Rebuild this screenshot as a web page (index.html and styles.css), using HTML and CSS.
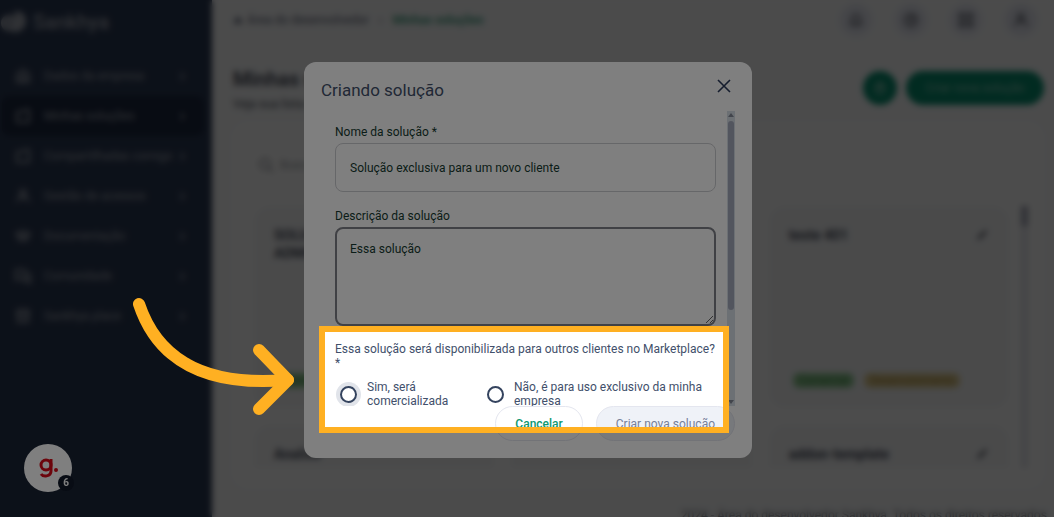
FILE: index.html
```html
<!DOCTYPE html>
<html lang="pt-BR">
<head>
    <meta charset="utf-8">
    <title>Minhas soluções</title>
    <link rel="stylesheet" href="styles.css">
</head>
<body>
    <div class="app">
        <aside class="sidebar">
            <div class="logo">
                <svg width="26" height="24" viewBox="0 0 26 24" fill="none" stroke="currentColor" stroke-width="6"><circle cx="8" cy="13" r="5"/><path d="M12 19c6 1 10-3 10-8s-4-8-8-6"/><circle cx="15" cy="12" r="2"/></svg>
                <span>Sankhya</span>
            </div>
            <nav class="menu">
                <a href="#"><svg class="icon" viewBox="0 0 16 16"><path d="M2 6l6-4 6 4v8H2zM5 8h6M5 11h6"/></svg><span>Dados da empresa</span><b>›</b></a>
                <a href="#" class="active"><svg class="icon" viewBox="0 0 16 16"><path d="M2 4h5l2-2h5v12H2z"/></svg><span>Minhas soluções</span><b>›</b></a>
                <a href="#"><svg class="icon" viewBox="0 0 16 16"><path d="M2 4h5l2-2h5v12H2z"/></svg><span>Compartilhadas comigo</span><b>›</b></a>
                <a href="#"><svg class="icon" viewBox="0 0 16 16"><circle cx="8" cy="5" r="3"/><path d="M2 14c0-6 12-6 12 0"/></svg><span>Gestão de acessos</span><b>›</b></a>
                <a href="#"><svg class="icon" viewBox="0 0 16 16"><path d="M1 6l7-3 7 3-7 3zM4 8v4h8V8"/></svg><span>Documentação</span><b>›</b></a>
                <a href="#"><svg class="icon" viewBox="0 0 16 16"><path d="M1 2h9v8H4l-3 2zM12 6h3v9l-3-2H7"/></svg><span>Comunidade</span><b>›</b></a>
                <a href="#"><svg class="icon" viewBox="0 0 16 16"><path d="M2 6l1-4h10l1 4zM3 7v7h10V7M6 10h4"/></svg><span>Sankhya place</span><b>›</b></a>
            </nav>
        </aside>

        <main class="main">
            <header class="topbar">
                <div class="breadcrumb">
                    <svg class="home" viewBox="0 0 16 16"><path d="M2 8l6-6 6 6v6H2z"/></svg>
                    <a href="#">Área do desenvolvedor</a>
                    <span class="sep">›</span>
                    <a href="#" class="current">Minhas soluções</a>
                </div>
                <div class="actions">
                    <button type="button" aria-label="Notificações"><svg class="icon" viewBox="0 0 16 16"><path d="M4 11V7a4 4 0 0 1 8 0v4l1 1H3zM7 14h2"/></svg></button>
                    <button type="button" aria-label="Ajuda"><svg class="icon" viewBox="0 0 16 16"><circle cx="8" cy="8" r="6"/><path d="M6 6h4L8 9v2"/></svg></button>
                    <button type="button" aria-label="Aplicativos"><svg class="icon" viewBox="0 0 16 16"><path d="M2 2h4v4H2zM10 2h4v4h-4zM2 10h4v4H2zM10 10h4v4h-4z"/></svg></button>
                    <button type="button" aria-label="Perfil"><svg class="icon" viewBox="0 0 16 16"><circle cx="8" cy="5" r="3"/><path d="M2 14c0-6 12-6 12 0"/></svg></button>
                </div>
            </header>

            <div class="page-head">
                <div class="page-title">
                    <h1>Minhas soluções</h1>
                    <p>Veja sua lista de soluções</p>
                </div>
                <div class="page-buttons">
                    <button type="button" class="round" aria-label="Baixar"><svg class="icon" viewBox="0 0 16 16"><path d="M8 2l5 6H3zM3 13h10"/></svg></button>
                    <button type="button" class="pill">Criar nova solução</button>
                </div>
            </div>

            <section class="panel">
                <div class="search">
                    <svg class="icon" viewBox="0 0 16 16"><circle cx="7" cy="7" r="5"/><path d="M11 11l4 4"/></svg>
                    <span>Buscar</span>
                </div>
                <div class="list">
                    <div class="cards">
                        <article class="card">
                            <h3>SOLUÇÃO<br>ADMIN</h3>
                            <div class="tags"><span class="tag green">Comercial</span></div>
                        </article>
                        <article class="card"></article>
                        <article class="card">
                            <h3>teste 401</h3>
                            <svg class="edit" viewBox="0 0 16 16"><path d="M2 14l2-5 8-7 2 2-7 8z"/></svg>
                            <div class="tags"><span class="tag green">Comercial</span><span class="tag yellow">Desenvolvimento</span></div>
                        </article>
                        <article class="card"><h3>Analise</h3></article>
                        <article class="card"></article>
                        <article class="card">
                            <h3>addon-template</h3>
                            <svg class="edit" viewBox="0 0 16 16"><path d="M2 14l2-5 8-7 2 2-7 8z"/></svg>
                        </article>
                    </div>
                    <div class="list-scroll"><div></div></div>
                </div>
            </section>
            <footer>2024 - Área do desenvolvedor Sankhya. Todos os direitos reservados.</footer>
        </main>
    </div>

    <div class="backdrop"></div>

    <button type="button" class="chat" aria-label="Ajuda">
        <svg width="24" height="24" viewBox="0 0 24 24" fill="none" stroke="#d80a18" stroke-width="3"><circle cx="10" cy="9" r="5"/><path d="M15 3v12c0 6-8 6-10 3"/><circle cx="20" cy="14" r="1" stroke-width="2"/></svg>
        <span class="badge">6</span>
    </button>

    <div class="modal-layer">
        <div class="modal" role="dialog" aria-labelledby="modal-title">
            <div class="modal-header">
                <h2 id="modal-title">Criando solução</h2>
                <button type="button" class="close" aria-label="Fechar">
                    <svg width="14" height="14" viewBox="0 0 14 14" fill="none" stroke="currentColor" stroke-width="1.6"><path d="M1 1l12 12M13 1L1 13"/></svg>
                </button>
            </div>

            <form>
                <div class="modal-body">
                    <div class="fields">
                        <label for="name">Nome da solução *</label>
                        <input type="text" id="name" class="text" value="Solução exclusiva para um novo cliente">

                        <label for="description">Descrição da solução</label>
                        <textarea id="description" class="text">Essa solução</textarea>

                        <fieldset>
                            <legend>Essa solução será disponibilizada para outros clientes no Marketplace? *</legend>
                            <div class="options">
                                <label class="option"><input type="radio" name="market" class="focused"><span>Sim, será comercializada</span></label>
                                <label class="option"><input type="radio" name="market"><span>Não, é para uso exclusivo da minha empresa</span></label>
                            </div>
                        </fieldset>
                    </div>
                    <div class="scrollbar">
                        <svg viewBox="0 0 8 10"><path d="M1 6l3-4 3 4z"/></svg>
                        <div class="thumb"></div>
                        <svg viewBox="0 0 8 10"><path d="M1 4l3 4 3-4z"/></svg>
                    </div>
                </div>
                <div class="modal-footer">
                    <button type="button" class="cancel">Cancelar</button>
                    <button type="submit" class="create">Criar nova solução</button>
                </div>
            </form>

            <div class="spotlight"></div>
            <svg class="arrow" width="172" height="130" viewBox="128 292 172 130" fill="none" stroke="#ffb022" stroke-width="12" stroke-linecap="round" stroke-linejoin="round">
                <path d="M139 304C155 352 195 388 288 380"/>
                <path d="M259 350L288 380L259 409"/>
            </svg>
        </div>
    </div>
</body>
</html>
```

FILE: styles.css
```css
* {
    box-sizing: border-box;
}

body {
    margin: 0;
    height: 100vh;
    overflow: hidden;
    font-family: Roboto, "Liberation Sans", sans-serif;
    font-size: 12px;
    background-color: #fafbfc;
}

button, input, textarea {
    font-family: inherit;
    font-size: inherit;
}

a {
    color: inherit;
    text-decoration: none;
}

h1, h2, h3, p {
    margin: 0;
}

.icon {
    width: 16px;
    height: 16px;
    fill: none;
    stroke: currentColor;
    stroke-width: 2;
}

/* page behind the dialog */
.app {
    display: flex;
    height: 100vh;
}

.sidebar {
    width: 212px;
    flex-shrink: 0;
    background-color: #2b3a55;
    color: #a3a8b3;
}

.logo {
    display: flex;
    align-items: center;
    gap: 6px;
    height: 44px;
    padding-left: 1px;
    font-size: 20px;
    font-weight: 500;
}

.menu {
    padding: 12px 8px 0 2px;
}

.menu a {
    display: flex;
    align-items: center;
    height: 40px;
    padding: 0 16px 0 13px;
    border-radius: 8px;
}

.menu .active {
    background-color: #1c2840;
}

.menu span {
    flex: 1;
    padding-left: 13px;
    white-space: nowrap;
}

.menu b {
    padding: 0 3px 4px 0;
    font-size: 18px;
}

.main {
    flex: 1;
    min-width: 0;
    display: flex;
    flex-direction: column;
}

.topbar {
    display: flex;
    justify-content: space-between;
    align-items: center;
    height: 40px;
    flex-shrink: 0;
    padding: 0 17px 0 21px;
}

.breadcrumb {
    display: flex;
    align-items: center;
    gap: 4px;
    color: #5d6478;
}

.home {
    width: 10px;
    height: 10px;
    fill: #7a8090;
}

.sep {
    padding: 0 6px;
}

.breadcrumb .current {
    color: #2f9a78;
    font-weight: 500;
}

.actions {
    display: flex;
    gap: 23px;
}

.actions button {
    width: 32px;
    height: 32px;
    padding: 8px;
    border: none;
    border-radius: 50%;
    background-color: #e6e8f2;
    color: #6a6d78;
}

.actions svg {
    display: block;
}

.page-head {
    display: flex;
    justify-content: space-between;
    align-items: flex-start;
    height: 82px;
    flex-shrink: 0;
    padding: 27px 10px 0 21px;
    color: #4d525e;
}

.page-title h1 {
    font-size: 20px;
    line-height: 24px;
    margin-bottom: 6px;
}

.page-buttons {
    display: flex;
    gap: 9px;
    padding-top: 4px;
}

.page-buttons button {
    height: 34px;
    border: none;
    border-radius: 17px;
    background-color: #069070;
    color: #8fc9b9;
}

.round {
    width: 34px;
    padding: 9px;
}

.pill {
    width: 138px;
}

.panel {
    flex-shrink: 0;
    margin: 0 10px 0 20px;
    padding: 34px 16px 20px 22px;
    border-radius: 16px;
    background-color: #ffffff;
}

.search {
    display: flex;
    align-items: center;
    gap: 6px;
    padding: 0 4px;
    height: 18px;
    color: #a0a3a8;
}

.list {
    display: flex;
    height: 262px;
    margin-top: 32px;
}

.cards {
    flex: 1;
    display: grid;
    grid-template-columns: repeat(3, 1fr);
    grid-auto-rows: 202px;
    gap: 17px;
    margin-right: 12px;
    overflow: hidden;
}

.card {
    position: relative;
    padding: 20px;
    border-radius: 16px;
    background-color: #f7f8f9;
    color: #4d5262;
    display: flex;
    flex-direction: column;
    justify-content: space-between;
}

.card h3 {
    font-size: 14px;
    line-height: 18px;
}

.edit {
    position: absolute;
    top: 22px;
    right: 20px;
    width: 14px;
    height: 14px;
    fill: #62666f;
}

.tags {
    display: flex;
    gap: 10px;
    padding-left: 4px;
}

.tag {
    padding: 0 6px;
    border-radius: 6px;
    font-size: 11px;
    line-height: 15px;
}

.green {
    background-color: #90cc93;
    color: #3f8a45;
}

.yellow {
    background-color: #e2cf94;
    color: #a08030;
}

.list-scroll {
    width: 7px;
    background-color: #e6e7ee;
}

.list-scroll div {
    height: 20px;
    background-color: #a5a8b8;
}

.panel .search {
    margin-top: 0;
}

footer {
    padding: 20px 4px 0 0;
    text-align: right;
    color: #777a82;
    white-space: nowrap;
}

.backdrop {
    position: fixed;
    inset: 0;
    background-color: rgba(0, 0, 0, 0.4);
    backdrop-filter: blur(3px);
}

/* help widget */
.chat {
    position: fixed;
    left: 24px;
    bottom: 25px;
    width: 48px;
    height: 48px;
    padding: 12px;
    border: none;
    border-radius: 50%;
    background-color: #ffffff;
}

.badge {
    position: absolute;
    right: -2px;
    bottom: 1px;
    width: 16px;
    height: 16px;
    border-radius: 50%;
    background-color: #101828;
    color: #ffffff;
    font-size: 10px;
    font-weight: bold;
    line-height: 16px;
}

/* dialog */
.modal-layer {
    position: fixed;
    inset: 0;
    display: flex;
    justify-content: center;
    align-items: flex-start;
    padding: 62px 0 0 2px;
}

.modal {
    position: relative;
    width: 448px;
    padding: 16px 17px 17px;
    border-radius: 12px;
    background-color: #ffffff;
    color: #42506b;
}

.modal-header {
    display: flex;
    justify-content: space-between;
    align-items: flex-start;
    height: 33px;
}

.modal-header h2 {
    font-size: 17px;
    line-height: 24px;
    font-weight: 400;
}

.close {
    padding: 1px 4px;
    border: none;
    background: none;
    color: #2b3a5c;
}

.close svg {
    display: block;
}

.modal-body {
    display: flex;
    height: 295px;
    overflow: hidden;
}

.fields {
    flex: 1;
    padding: 14px 11px 0 14px;
}

.fields > label {
    display: block;
    line-height: 14px;
    margin-bottom: 4px;
    color: #163b30;
}

.text {
    display: block;
    width: 100%;
    padding: 14px;
    border: 1px solid #cdced2;
    border-radius: 8px;
    background-color: #ffffff;
    color: #163b30;
    outline: none;
}

input.text {
    height: 49px;
    margin-bottom: 17px;
}

textarea.text {
    height: 99px;
    padding: 13px;
    border: 2px solid #80828a;
}

fieldset {
    margin: 0;
    padding: 0;
    border: none;
}

legend {
    padding: 16px 0 10px;
    line-height: 14px;
}

.options {
    display: grid;
    grid-template-columns: 132px 1fr;
    gap: 15px;
}

.option {
    display: flex;
    align-items: center;
    gap: 10px;
    padding-left: 5px;
    line-height: 14px;
}

.option input {
    appearance: none;
    flex-shrink: 0;
    width: 17px;
    height: 17px;
    margin: 0;
    border: 2px solid #34435e;
    border-radius: 50%;
}

.option .focused {
    box-shadow: 0 0 0 4px #e1e4ea;
}

.scrollbar {
    display: flex;
    flex-direction: column;
    width: 8px;
    background-color: #d9e0e8;
}

.scrollbar svg {
    height: 10px;
    fill: #848a98;
}

.thumb {
    height: 189px;
    margin: 0 1px auto;
    border-radius: 3px;
    background-color: #a5abbd;
}

.modal-footer {
    display: flex;
    justify-content: flex-end;
    gap: 13px;
}

.modal-footer button {
    height: 35px;
    padding: 0 19px;
    border: 1px solid #e4e6ef;
    border-radius: 18px;
    background-color: #ffffff;
}

.modal-footer .cancel {
    color: #0f9870;
    font-weight: 500;
}

.modal-footer .create {
    background-color: #eff2f8;
    color: #76809a;
}

/* tour step */
.spotlight {
    position: absolute;
    top: 264px;
    left: 15px;
    width: 410px;
    height: 107px;
    border: 6px solid #ffb022;
    box-shadow: 0 0 0 2000px rgba(0, 0, 0, 0.5);
    pointer-events: none;
}

.arrow {
    position: absolute;
    top: 230px;
    left: -176px;
    pointer-events: none;
}
```
